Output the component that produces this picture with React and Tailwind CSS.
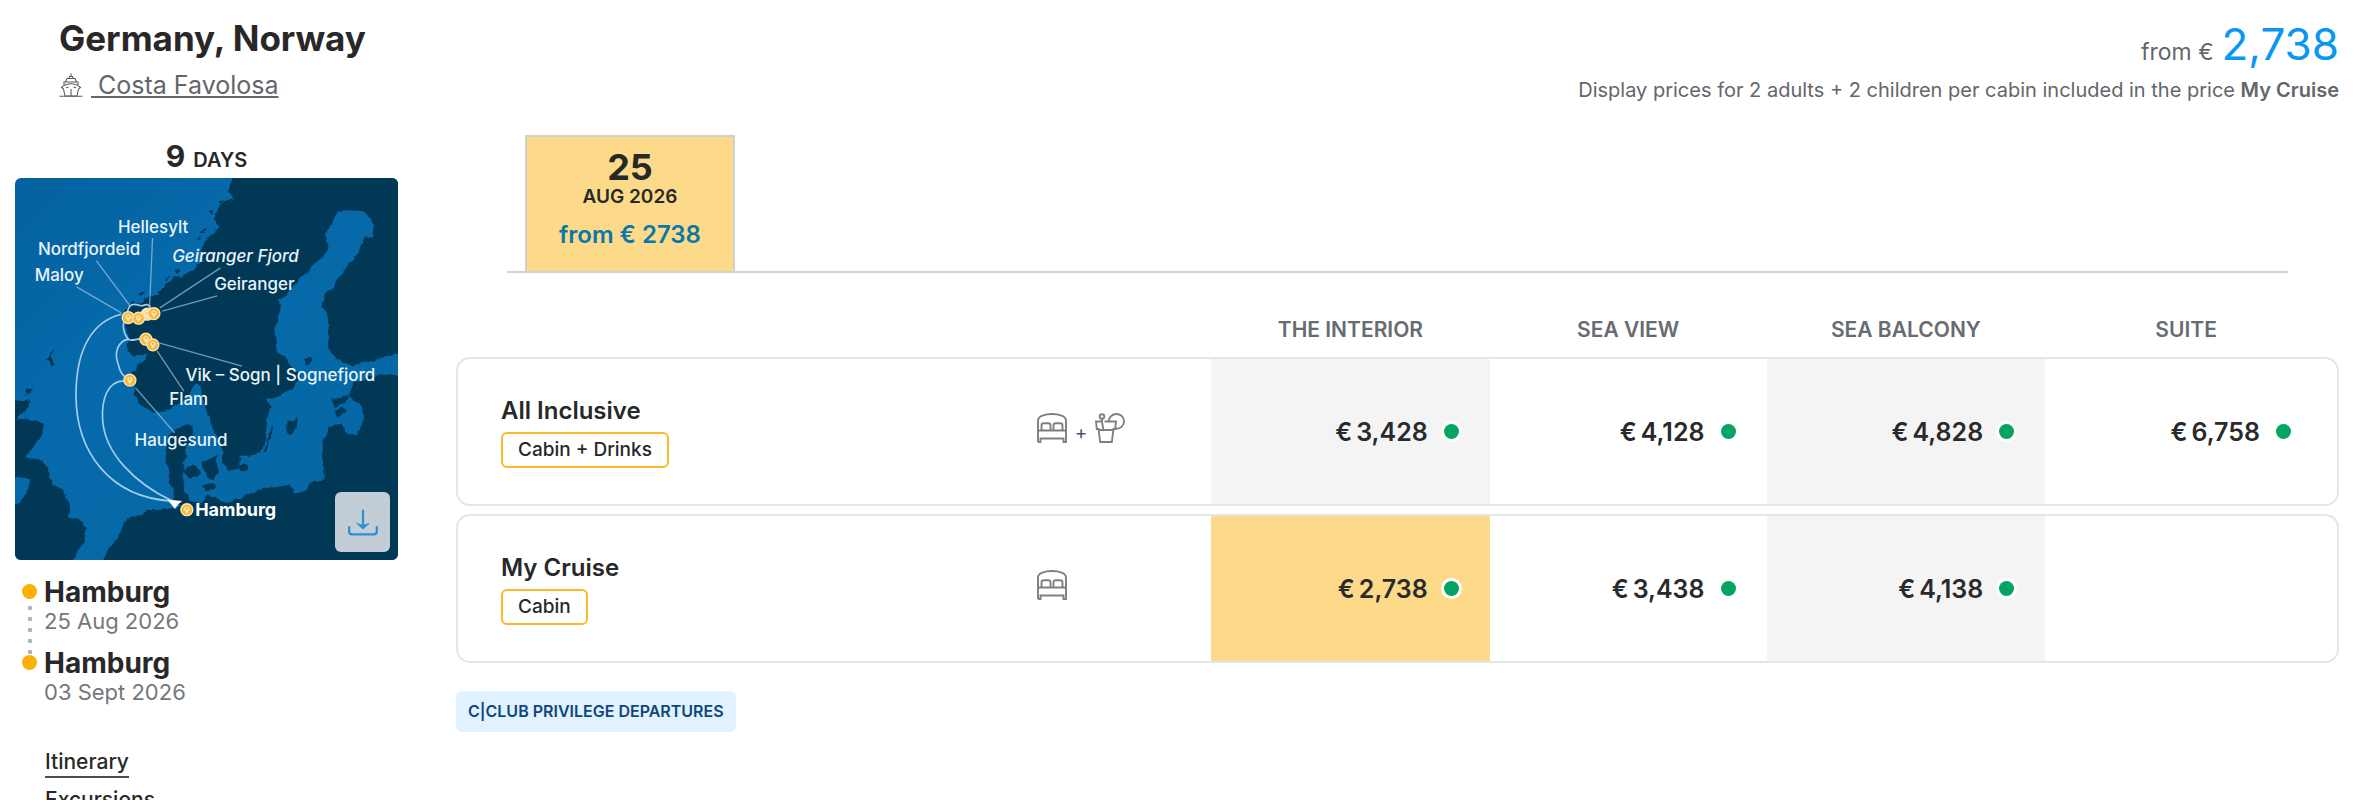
import React from "react";

const fares = [
  {
    name: "All Inclusive",
    tag: "Cabin + Drinks",
    drinks: true,
    prices: ["3,428", "4,128", "4,828", "6,758"],
  },
  {
    name: "My Cruise",
    tag: "Cabin",
    drinks: false,
    prices: ["2,738", "3,438", "4,138", null],
    best: 0,
  },
];

const stops = [
  { port: "Hamburg", date: "25 Aug 2026" },
  { port: "Hamburg", date: "03 Sept 2026" },
];

function ShipIcon() {
  return (
    <svg viewBox="0 0 24 24" className="size-6 shrink-0" fill="none" stroke="#5c5f62" strokeWidth="1.1" aria-hidden="true">
      <path d="M12 0.500v3M10.500 3.500h3l.8 2h-4.600zM8 5.500h8l1.500 3.500h-11zM5 12V9h14v3" />
      <path d="M2.500 14.500C5 12 8.500 10.800 12 10.800s7 1.200 9.500 3.700L19.500 16 18 23H6L4.500 16z" />
      <path d="M12 16v7M7 14.800l2.500-.8M14.500 14l2.500.8M0.500 23.200h23" />
    </svg>
  );
}

function BedIcon() {
  return (
    <svg viewBox="0 0 30 30" className="size-[30px]" fill="none" stroke="#7d8184" strokeWidth="1.9" aria-hidden="true">
      <path d="M1 29V7.500C1 3 8 1 15 1s14 2 14 6.500V29h-2.500v-3.500h-23V29H1M1 17.500h28" />
      <path d="M4.500 17v-4.500c0-1.500 1-2.300 2.300-2.300h4.400c1.300 0 2.300.8 2.300 2.300v4.500M16.500 17v-4.500c0-1.500 1-2.300 2.300-2.300h4.400c1.300 0 2.300.8 2.300 2.300v4.500" />
    </svg>
  );
}

function DrinkIcon() {
  return (
    <svg viewBox="0 0 30 30" className="size-[30px]" fill="none" stroke="#7d8184" strokeWidth="1.9" aria-hidden="true">
      <path d="M6 8.500H1l.8 7.500h1.700l1.700 13h11.600l1.700-13h1.700L21 8.500H9.500M3.500 17h15" />
      <circle cx="7" cy="3.500" r="2.300" />
      <path d="M7 6v3l1.500 8M13.500 8.500C14 4 17.500 1 21.500 1c4.300 0 7.500 3.200 7.500 7.300s-3.300 7.500-7.500 7.500h-1.500" />
    </svg>
  );
}

function DownloadIcon() {
  return (
    <svg viewBox="0 0 30 27" className="h-[27px] w-[30px]" fill="none" stroke="#2a90da" strokeWidth="2.200" strokeLinecap="round" aria-hidden="true">
      <path d="M1.200 18v4.500c0 1.700 1 2.800 2.800 2.800h22c1.800 0 2.800-1.100 2.800-2.800V18M15 1.500V19" />
      <path d="M9 14.500l6 5.500 6-5.500-6 2z" fill="#2a90da" strokeWidth="1" />
    </svg>
  );
}

function Pin({ x, y, pale }) {
  return (
    <g>
      <circle cx={x} cy={y} r="18" fill={pale ? "#f6e3a8" : "#f8ba3e"} stroke="#fbe6b4" strokeWidth="4" />
      <path d={`M${x} ${y + 12}l-8-13a8 8 0 1 1 16 0z`} fill="#fde9b9" />
      <circle cx={x} cy={y - 3} r="3" fill="#f3a91f" />
    </g>
  );
}

function RouteMap() {
  return (
    <svg viewBox="43 25 1150 1148" className="block w-full rounded-md font-['Inter',sans-serif]" role="img" aria-label="Cruise route map">
      <defs>
        <filter id="coast" x="0" y="0" width="100%" height="100%">
          <feTurbulence type="fractalNoise" baseFrequency="0.03" numOctaves="3" seed="4" />
          <feDisplacementMap in="SourceGraphic" scale="18" xChannelSelector="R" yChannelSelector="G" />
        </filter>
        <linearGradient id="sea" x1="0" y1="0" x2="1" y2="1">
          <stop offset="0" stopColor="#0461a0" />
          <stop offset="0.35" stopColor="#066aaa" />
          <stop offset="1" stopColor="#0566a4" />
        </linearGradient>
      </defs>
      <rect x="43" y="25" width="1150" height="1148" fill="url(#sea)" />
      <g filter="url(#coast)" fill="#023756">
        <path d="M705 0L690 45 680 70 700 85 670 95 650 120 640 150 660 172 635 195 610 220 600 250 610 275 575 305 545 325 520 322 500 348 475 365 480 378 440 385 420 402 395 395 375 420 370 450 378 480 388 510 380 545 400 562 450 555 420 580 395 610 405 640 400 680 425 710 460 730 500 725 540 700 570 670 585 640 600 650 605 680 615 700 630 760 650 800 665 840 665 880 680 905 715 897 720 860 750 855 780 850 795 810 800 750 810 710 800 690 840 675 870 660 900 625 880 600 850 560 828 545 823 490 830 455 840 420 835 390 860 370 900 325 940 290 970 260 985 235 972 200 990 165 1010 130 1040 122 1090 125 1110 145 1120 170 1120 205 1095 200 1075 245 1040 290 1015 325 1000 355 975 370 965 400 980 430 985 470 980 520 990 555 1020 575 1060 590 1110 575 1150 560 1220 553V0z" />
        <path d="M1220 628L1160 615 1110 620 1060 640 1045 680 1085 710 1088 750 1070 797 1045 797 1020 760 985 775 970 810 965 860 970 930 940 935 915 965 885 972 870 945 820 955 770 965 720 985 680 1003 650 985 620 975 600 1003 570 990 555 965 545 930 550 900 540 875 560 860 555 830 575 800 580 765 560 765 530 780 505 800 497 840 495 880 510 910 505 940 520 960 515 990 545 1010 500 1022 450 1022 400 1040 370 1060 355 1100 330 1130 290 1200H1220z" />
        <path d="M20 695L85 690 80 715 50 750 100 755 130 765 125 790 100 830 75 865 120 870 145 900 160 945 190 960 205 1000 205 1040 240 1055 260 1080 255 1115 230 1145 225 1165 200 1200H20V1010L60 1000 75 970 90 935 50 920H20z" />
        <ellipse cx="574" cy="908" rx="23" ry="22" />
        <path d="M610 880l20-12 20-12 5 50-18 25-22-12z" />
        <path d="M605 945l40 0 5 14-35 6z" />
        <path d="M895 740l-30 15-8 30 16 12 14-28z" />
        <path d="M815 765l-15 50-12 35 10-5 20-60z" />
        <path d="M1000 690l45-12-10 22-40 14zM1000 725l30-15 15 12-35 22z" />
        <path d="M915 568l18-5 5 16-18 6z" />
        <path d="M712 890l25-5 8 14-25 6z" />
        <path d="M165 540l-10 20 4 25-8 10-4-25-10 0 10-10z" />
        <path d="M75 660l20-6-6 18-14 4z" />
        <path d="M655 95l15-8-6 18zM625 125l14-6-4 16zM600 185l18-10-6 18zM585 205l16-6-6 14zM490 325l16-6-8 16zM520 305l20-8-10 16zM415 372l18-6-8 14z" />
      </g>
      <g fill="none" stroke="#a9cdec" strokeOpacity="0.65" strokeWidth="4">
        <path d="M456 205L447 415M287 273L388 408M228 352L362 430M660 295L478 415M650 379L485 425M725 590L475 520M550 665L470 545M522 790L405 655" />
      </g>
      <g fill="none" stroke="#a3cdf0" strokeWidth="5">
        <path d="M362 434C280 455 227 530 226 675C226 850 330 985 515 995" />
        <path d="M370 634C320 635 303 690 306 750C312 850 400 940 515 995" />
        <path d="M418 508C390 512 385 520 372 490C365 470 368 455 378 445M385 508C350 515 340 550 353 585C358 605 365 618 375 622M380 430C385 400 400 402 418 408C430 412 440 395 450 415" />
      </g>
      <path d="M500 990l45 5-10 8-12 15z" fill="#fff" />
      <Pin x={440} y={434} pale />
      <Pin x={383} y={444} />
      <Pin x={414} y={446} />
      <Pin x={460} y={432} />
      <Pin x={436} y={509} />
      <Pin x={457} y={526} />
      <Pin x={388} y={632} />
      <Pin x={559} y={1021} />
      <g fill="#e9f3fb" fontSize="51" fontWeight="500">
        <text x="352" y="189">Hellesylt</text>
        <text x="112" y="256">Nordfjordeid</text>
        <text x="102" y="335">Maloy</text>
        <text x="515" y="277" fontStyle="italic">Geiranger Fjord</text>
        <text x="641" y="361">Geiranger</text>
        <text x="555" y="636">Vik – Sogn | Sognefjord</text>
        <text x="506" y="708">Flam</text>
        <text x="402" y="831">Haugesund</text>
        <text x="584" y="1039" fontWeight="700" fontSize="54" fill="#fff">Hamburg</text>
      </g>
    </svg>
  );
}

function Price({ value }) {
  return (
    <span className="inline-flex items-center gap-4 text-[25px] leading-8 font-semibold text-[#282a2c]">
      <span className="flex gap-1">
        <span>€</span>
        <span>{value}</span>
      </span>
      <span className="size-[15px] rounded-full bg-[#04a562] ring-3 ring-white" />
    </span>
  );
}

const cellBorder = "border-y-2 border-[#e3e7ea]";

export default function App() {
  return (
    <div className="bg-white font-['Inter',sans-serif] text-[#282828]">
      <header className="flex items-start justify-between pt-4 pr-[15px] pl-[59px]">
        <div>
          <h1 className="text-[35px] leading-[44px] font-bold">Germany, Norway</h1>
          <div className="mt-[9px] flex items-center gap-2">
            <ShipIcon />
            <a href="#ship" className="text-[25px] leading-8 text-[#63666a] underline decoration-2 underline-offset-2">
              &nbsp;Costa Favolosa
            </a>
          </div>
        </div>
        <div className="text-right text-[#63666a]">
          <p className="flex items-baseline justify-end gap-2">
            <span className="text-[23px] leading-8">from €</span>
            <span className="text-[44px] leading-[56px] text-[#0a96f5]">2,738</span>
          </p>
          <p className="mt-1 text-[20px] leading-7">
            Display prices for 2 adults + 2 children per cabin included in the price{" "}
            <strong className="font-semibold">My Cruise</strong>
          </p>
        </div>
      </header>

      <main className="flex gap-[58px] px-[15px]">
        <aside className="w-[383px] shrink-0 pt-[34px]">
          <p className="flex items-baseline justify-center gap-2">
            <span className="text-[30px] leading-9 font-bold">9</span>
            <span className="text-[20px] leading-7 font-semibold">DAYS</span>
          </p>
          <div className="relative mt-1">
            <RouteMap />
            <button
              type="button"
              aria-label="Download map"
              className="absolute right-2 bottom-2 flex h-[60px] w-[55px] items-center justify-center rounded-md bg-[#c2cdd5]"
            >
              <DownloadIcon />
            </button>
          </div>

          <ol className="mt-4 flex flex-col gap-[13px] pl-[7px]">
            {stops.map((stop, i) => (
              <li key={i} className="flex gap-[7px]">
                <div className="flex h-[58px] w-[15px] flex-col items-center gap-[7px] pt-2">
                  <span className="size-[15px] shrink-0 rounded-full bg-[#fab005]" />
                  {i === 0 &&
                    [0, 1, 2, 3, 4].map((n) => <span key={n} className="size-1 shrink-0 rounded-[1px] bg-[#a9b4be]" />)}
                </div>
                <div>
                  <p className="text-[28px] leading-8 font-bold">{stop.port}</p>
                  <p className="text-[22px] leading-[26px] text-[#74787c]">{stop.date}</p>
                </div>
              </li>
            ))}
          </ol>

          <nav className="mt-[43px] flex flex-col items-start gap-2 pl-[30px] text-[21px] leading-7 font-medium">
            <a href="#itinerary" className="border-b-2 border-[#4b4f4e]">Itinerary</a>
            <a href="#excursions" className="border-b-2 border-[#4b4f4e]">Excursions</a>
          </nav>
        </aside>

        <section className="min-w-0 grow pt-[31px]">
          <div className="mx-[51px] border-b-2 border-[#d0d2d3] pl-[18px]">
            <button
              type="button"
              className="flex w-[210px] flex-col items-center border-2 border-b-0 border-[#d0d0cc] bg-[#fcda89] pt-3 pb-[22px]"
            >
              <span className="text-[36px] leading-9 font-bold">25</span>
              <span className="text-[19px] leading-6 font-semibold">AUG 2026</span>
              <span className="mt-3 text-[24px] leading-7 font-semibold text-[#0b77a8]">from € 2738</span>
            </button>
          </div>

          <table className="w-full table-fixed border-separate border-spacing-x-0 border-spacing-y-2">
            <thead>
              <tr className="text-[21px] leading-7 text-[#686c70]">
                <td className="w-[28.4%]" />
                <td className="w-[11.7%]" />
                <th scope="col" className="w-[14.8%] pt-[35px] pb-[5px] font-semibold">THE INTERIOR</th>
                <th scope="col" className="w-[14.7%] pt-[35px] pb-[5px] font-semibold">SEA VIEW</th>
                <th scope="col" className="w-[14.8%] pt-[35px] pb-[5px] font-semibold">SEA BALCONY</th>
                <th scope="col" className="pt-[35px] pr-3 pb-[5px] font-semibold">SUITE</th>
              </tr>
            </thead>
            <tbody>
              {fares.map((fare) => (
                <tr key={fare.name} className="h-[149px]">
                  <th scope="row" className={`rounded-l-[14px] border-l-2 pb-[3px] pl-[43px] text-left font-normal ${cellBorder}`}>
                    <p className="text-[24px] leading-9 font-semibold">{fare.name}</p>
                    <span className="mt-[3px] inline-block rounded-md border-2 border-[#fbb829] px-[15px] align-top text-[19px] leading-8 font-medium">
                      {fare.tag}
                    </span>
                  </th>
                  <td className={`pb-2 pl-[46px] ${cellBorder}`}>
                    <div className="flex items-end gap-2">
                      <BedIcon />
                      {fare.drinks && (
                        <>
                          <span className="text-[19px] leading-5 text-[#44586f]">+</span>
                          <DrinkIcon />
                        </>
                      )}
                    </div>
                  </td>
                  {fare.prices.map((price, i) => (
                    <td
                      key={i}
                      className={`text-right ${cellBorder} ${
                        i === 3 ? "rounded-r-[14px] border-r-2 pr-[46px]" : "pr-[31px]"
                      } ${fare.best === i ? "bg-[#fcda89]" : i % 2 === 0 ? "bg-[#f4f4f4]" : ""}`}
                    >
                      {price && <Price value={price} />}
                    </td>
                  ))}
                </tr>
              ))}
            </tbody>
          </table>

          <p className="mt-5 inline-block rounded-md bg-[#e0f2ff] px-3 text-[16px] leading-[41px] font-semibold text-[#12457a]">
            C|CLUB PRIVILEGE DEPARTURES
          </p>
        </section>
      </main>
    </div>
  );
}
